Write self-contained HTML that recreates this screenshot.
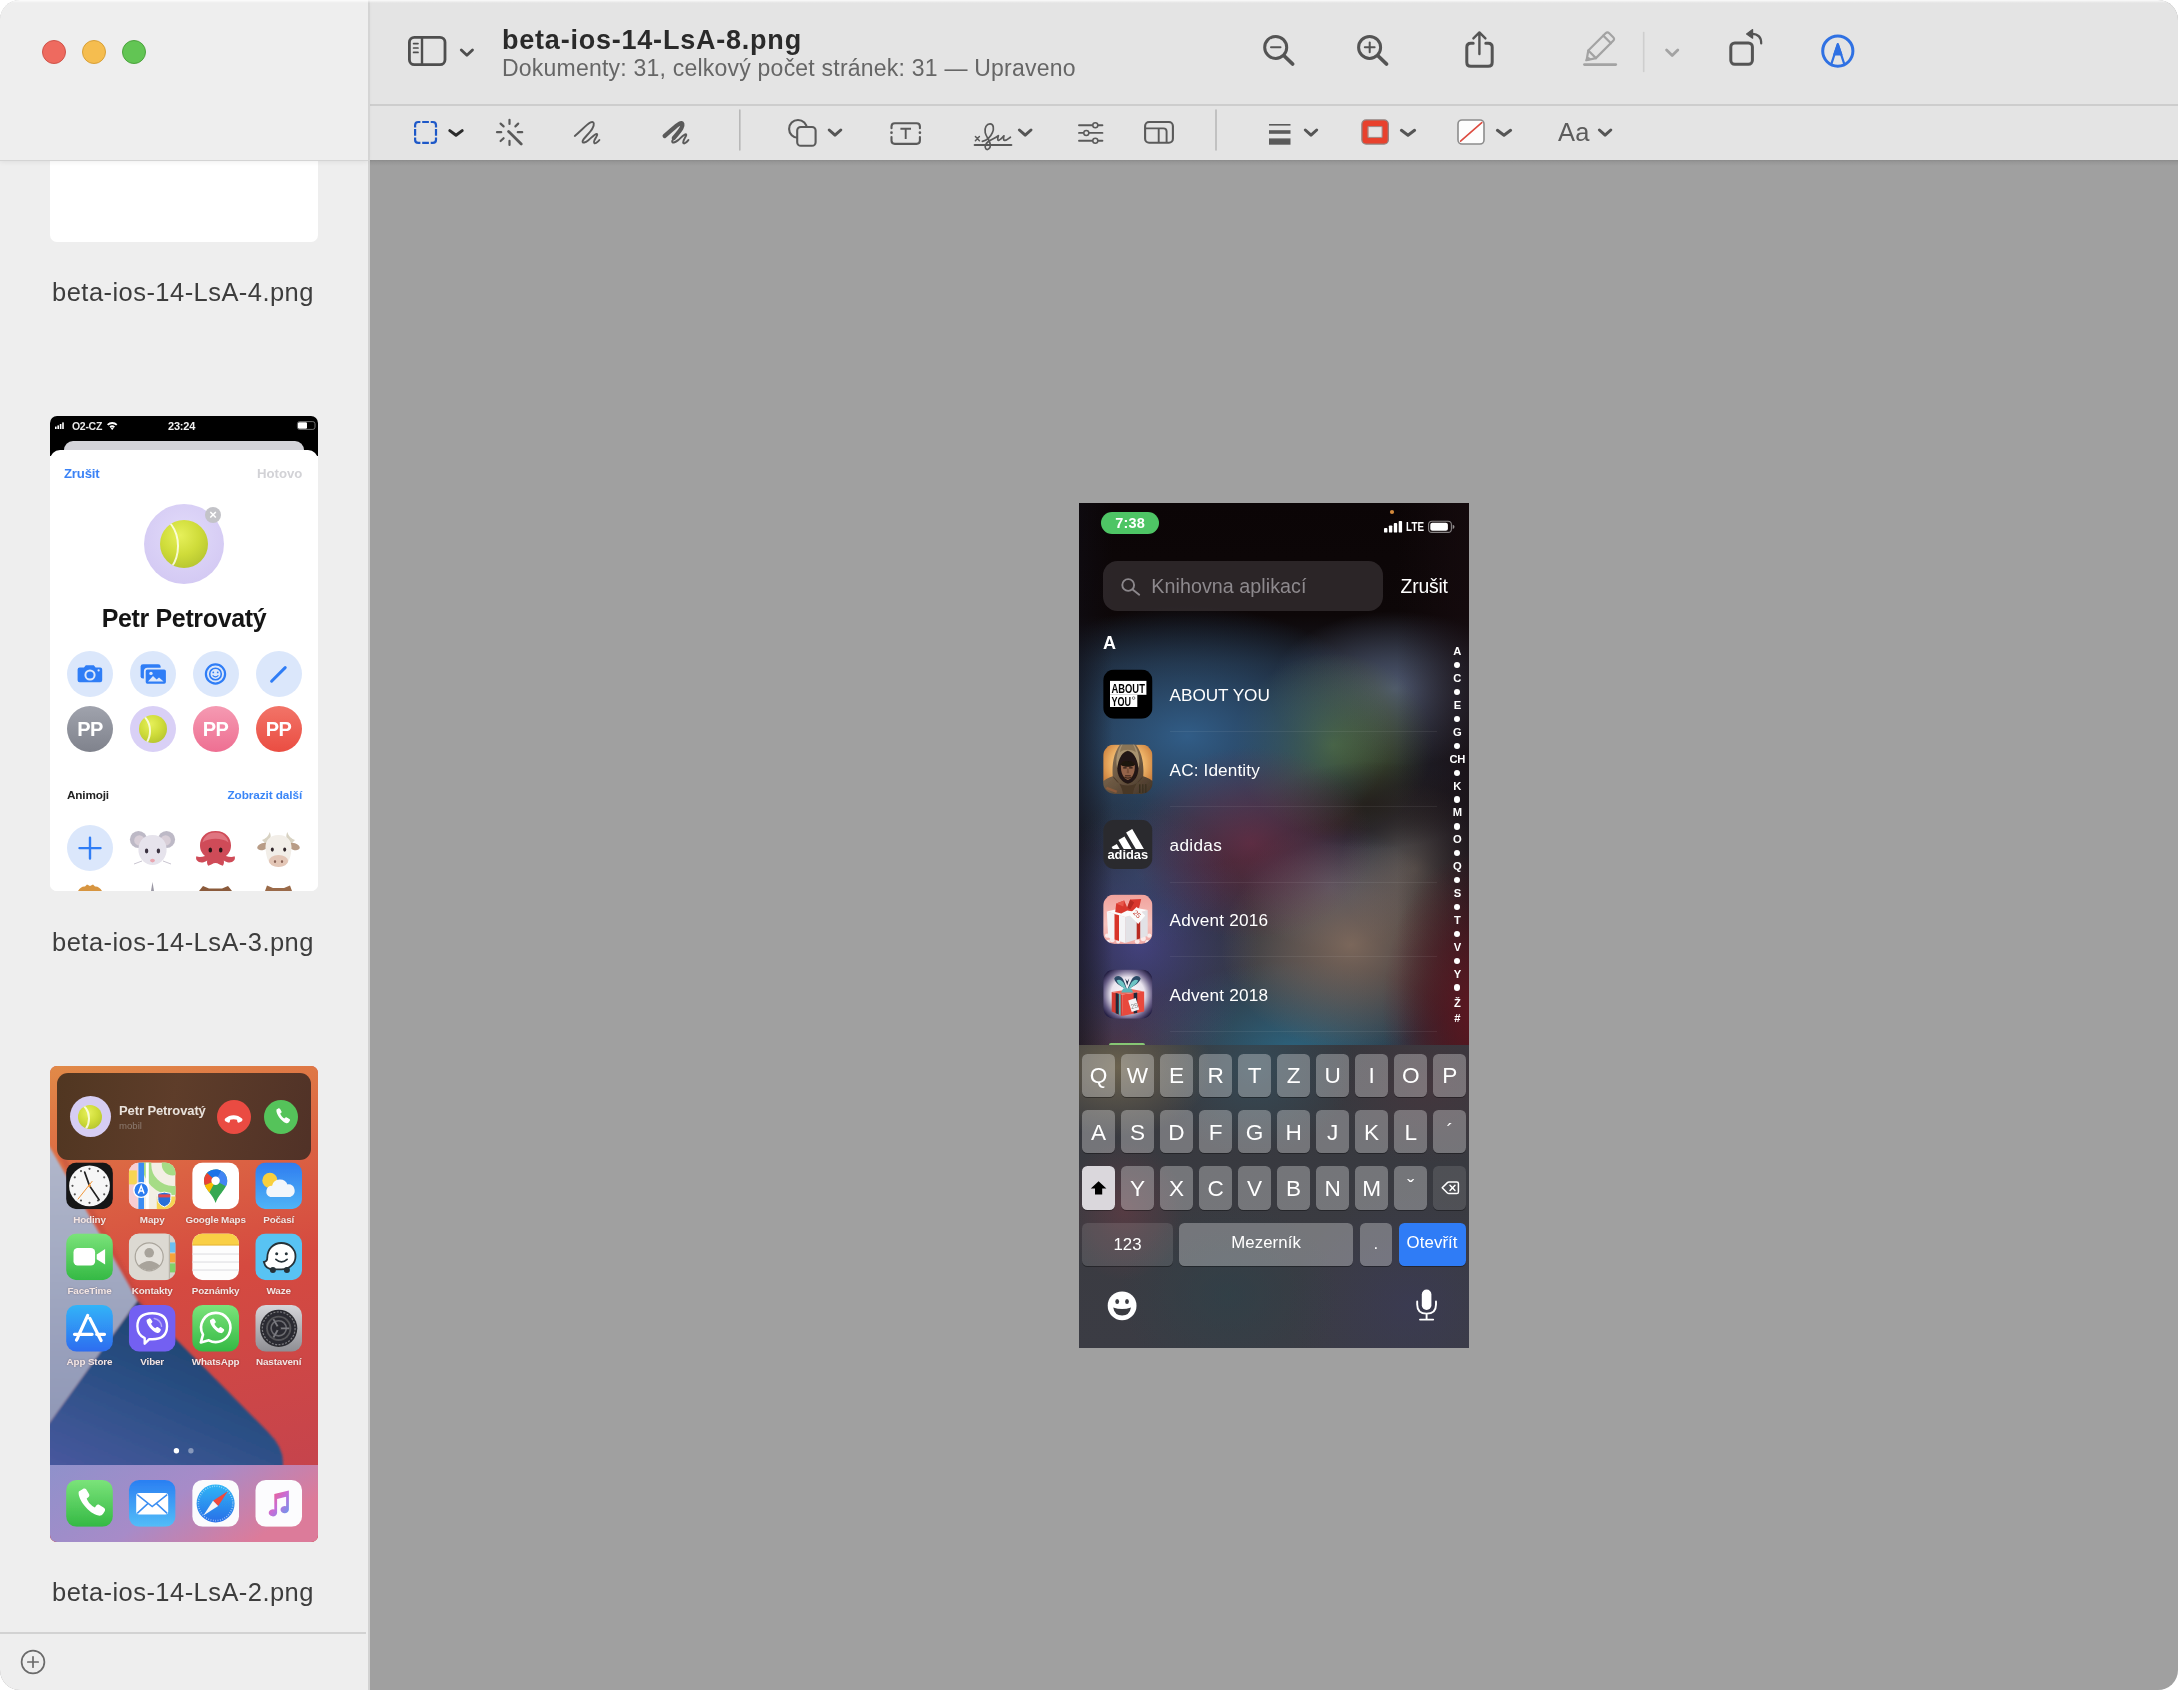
<!DOCTYPE html>
<html lang="cs">
<head>
<meta charset="utf-8">
<title>beta-ios-14-LsA-8.png</title>
<style>
*{box-sizing:border-box;margin:0;padding:0}
html,body{width:2178px;height:1690px;overflow:hidden;background:#fff;font-family:"Liberation Sans",sans-serif;}
.abs{position:absolute}
#win{position:absolute;left:0;top:0;width:2178px;height:1690px;border-radius:20px;overflow:hidden;background:#a0a0a0;will-change:transform;}
#sidebar{position:absolute;left:0;top:0;width:368px;height:1690px;background:#eeeeee;}
#sideline{position:absolute;left:368px;top:0;width:2px;height:1690px;background:linear-gradient(#dadada 0,#dadada 160px,#d2d2d2 161px);}
#titlebar{position:absolute;left:370px;top:0;width:1808px;height:106px;background:#e4e4e4;border-bottom:2px solid #cdcdcd;}
#markup{position:absolute;left:370px;top:106px;width:1808px;height:54px;background:#e4e4e4;box-shadow:0 0 0 0 #000;}
#tbshadow{position:absolute;left:370px;top:160px;width:1808px;height:6px;background:linear-gradient(#8b8b8b,#979797 35%,#a0a0a0);}
#sidetop{position:absolute;left:0;top:0;width:368px;height:161px;background:#eeeeee;border-bottom:1px solid #d4d4d4;z-index:3;box-shadow:0 1px 5px rgba(0,0,0,.07)}
.light{position:absolute;top:40px;width:24px;height:24px;border-radius:50%;}
.thumb{position:absolute;left:50px;width:268px;border-radius:7px;overflow:hidden;}
.tlabel{position:absolute;left:0;width:366px;text-align:center;font-size:25.500px;color:#3d3d3d;letter-spacing:.45px;margin-top:2px}
#title{position:absolute;left:502px;top:25px;font-size:27px;font-weight:bold;color:#2a2a2a;letter-spacing:.78px}
#subtitle{position:absolute;left:502px;top:55px;font-size:23px;color:#666;letter-spacing:.22px}
#phone{position:absolute;left:1079px;top:503px;width:390px;height:845px;overflow:hidden;background:#0c0607;}
.tb{filter:blur(.35px);white-space:nowrap}
.c46{width:46px;height:46px;border-radius:50%}
.pp{color:#fff;font-size:20px;font-weight:bold;text-align:center;line-height:46px;letter-spacing:-.5px;filter:blur(.3px)}
.ball{border-radius:50%;background:radial-gradient(circle at 42% 32%,#e6f05a 0%,#cfdc3a 45%,#a9b92a 100%);overflow:hidden}
.ball:before{content:"";position:absolute;left:-52%;top:-8%;width:84%;height:116%;border-radius:50%;border:2px solid rgba(255,255,240,.85)}
.al{width:80px;text-align:center;font-size:9.900px;font-weight:bold;color:#f3e6e4;letter-spacing:-.15px;margin-top:-.5px;filter:blur(.4px);white-space:nowrap;text-shadow:0 0 2px rgba(60,20,20,.35)}
.ix{left:358.300px;width:40px;text-align:center;font-size:11.200px;font-weight:bold;color:#fff;line-height:13px;letter-spacing:-.2px}
.k{border-radius:5.500px;background:rgba(255,255,255,.30);color:#fff;font-size:22.600px;text-align:center;box-shadow:0 1px 0 rgba(0,0,0,.35);white-space:nowrap;overflow:hidden}
.kd{background:rgba(255,255,255,.115)}
.k:not(.ks){padding-top:.8px}
.ks{font-size:16.800px;letter-spacing:.1px}
svg{position:absolute;overflow:visible}
</style>
</head>
<body>
<div id="win">
  <div id="sidebar"></div>
  <div id="sideline"></div>
  <div id="titlebar"></div>
  <div id="markup"></div>
  <div id="tbshadow"></div>

  <!-- thumb 1 (partially scrolled) -->
  <div class="thumb" style="top:120px;height:122px;background:#fff"></div>
  <div class="tlabel" style="top:276px">beta-ios-14-LsA-4.png</div>

  <!-- thumb 2 : contact photo editor -->
  <div class="thumb" id="t2" style="top:416px;height:475px;background:#fff">
    <div class="abs" style="left:0;top:0;width:268px;height:40px;background:#000"></div>
    <div class="abs" style="left:14px;top:25px;width:240px;height:20px;border-radius:9px 9px 0 0;background:#d3d3d8"></div>
    <div class="abs" style="left:0;top:34px;width:268px;height:441px;border-radius:10px 10px 0 0;background:#fff"></div>
    <!-- status bar -->
    <svg style="left:0;top:0" width="268" height="20" viewBox="0 0 268 20">
      <g fill="#fff"><rect x="5" y="10.6" width="1.6" height="2.4"/><rect x="7.4" y="9.4" width="1.6" height="3.6"/><rect x="9.8" y="8" width="1.6" height="5"/><rect x="12.2" y="6.4" width="1.6" height="6.6"/>
      <path d="M57 8.2 a7.4 7.4 0 0 1 10.4 0 l-1.3 1.4 a5.4 5.4 0 0 0 -7.8 0z M59.4 10.6 a4 4 0 0 1 5.6 0 l-1.3 1.3 a2.2 2.2 0 0 0 -3 0z M62.2 14 l-1.5 -1.6 a2.1 2.1 0 0 1 3 0z"/>
      <rect x="248" y="6.2" width="9" height="6.6" rx="1.2"/></g>
      <rect x="247.4" y="5.6" width="17.6" height="7.8" rx="2.2" fill="none" stroke="#8a8a8a" stroke-width=".8"/>
    </svg>
    <div class="abs tb" style="left:22px;top:3.5px;font-size:10.5px;font-weight:bold;color:#e8e8e8;letter-spacing:-.3px">O2-CZ</div>
    <div class="abs tb" style="left:118px;top:3.5px;font-size:11px;font-weight:bold;color:#f2f2f2;letter-spacing:-.2px">23:24</div>
    <div class="abs tb" style="left:14px;top:49.500px;font-size:13.200px;color:#3a82f6;font-weight:bold;letter-spacing:-.2px">Zrušit</div>
    <div class="abs tb" style="left:207px;top:49.500px;font-size:13.200px;color:#d2d2d6;font-weight:bold;letter-spacing:0">Hotovo</div>
    <!-- avatar -->
    <div class="abs" style="left:94px;top:88px;width:80px;height:80px;border-radius:50%;background:radial-gradient(circle at 50% 40%,#e2dbfa,#cfc4f1)"></div>
    <div class="abs ball" style="left:110px;top:104px;width:48px;height:48px"></div>
    <div class="abs" style="left:155px;top:91px;width:16px;height:16px;border-radius:50%;background:#c3c3c8;color:#fff;font-size:13px;line-height:15px;text-align:center;font-weight:bold">×</div>
    <div class="abs tb" style="left:0;top:188px;width:268px;text-align:center;font-size:25px;font-weight:bold;color:#151515;letter-spacing:-.35px">Petr Petrovatý</div>
    <!-- row 1 -->
    <div class="abs c46" style="left:17px;top:235px;background:#dbe7fb"></div>
    <div class="abs c46" style="left:79.5px;top:235px;background:#dbe7fb"></div>
    <div class="abs c46" style="left:142.5px;top:235px;background:#dbe7fb"></div>
    <div class="abs c46" style="left:205.5px;top:235px;background:#dbe7fb"></div>
    <svg style="left:0;top:235px" width="268" height="46" viewBox="0 235 268 46">
      <!-- camera -->
      <path d="M29.6 251.6 h4.4 l1.8 -2.4 h8 l1.8 2.4 h4.6 q2 0 2 2 v10.6 q0 2 -2 2 h-20.6 q-2 0 -2 -2 v-10.6 q0 -2 2 -2z" fill="#2f7df6"/>
      <circle cx="40" cy="259" r="4.6" fill="none" stroke="#dbe7fb" stroke-width="2"/><circle cx="48.6" cy="254.4" r="1.1" fill="#dbe7fb"/>
      <!-- photos -->
      <rect x="90.6" y="248.2" width="20" height="14.4" rx="2.4" fill="#2f7df6"/>
      <rect x="94.8" y="252.6" width="22" height="16" rx="2.6" fill="#2f7df6" stroke="#dbe7fb" stroke-width="1.8"/>
      <path d="M98 265.6 l5 -5.6 l3.6 3.6 l2.4 -2 l4.6 4z" fill="#dbe7fb"/><circle cx="101" cy="257.4" r="1.7" fill="#dbe7fb"/>
      <!-- emoji -->
      <circle cx="165.5" cy="258" r="9.6" fill="none" stroke="#2f7df6" stroke-width="2.2"/><circle cx="165.5" cy="258" r="5.8" fill="none" stroke="#2f7df6" stroke-width="1.6"/>
      <circle cx="163.3" cy="256.4" r=".9" fill="#2f7df6"/><circle cx="167.7" cy="256.4" r=".9" fill="#2f7df6"/><path d="M162.6 259.4 q2.9 2.8 5.8 0" stroke="#2f7df6" stroke-width="1.2" fill="none"/>
      <!-- pencil -->
      <path d="M221.6 265.2 l13.6 -13.6" stroke="#2f7df6" stroke-width="3" stroke-linecap="round"/>
    </svg>
    <!-- row 2 -->
    <div class="abs c46 pp" style="left:17px;top:290px;background:linear-gradient(#a0a3ad,#7f828c)">PP</div>
    <div class="abs c46" style="left:79.5px;top:290px;background:#d9d0f6"></div>
    <div class="abs ball" style="left:88.5px;top:299px;width:28px;height:28px"></div>
    <div class="abs c46 pp" style="left:142.5px;top:290px;background:linear-gradient(#f59ab2,#ee6f92)">PP</div>
    <div class="abs c46 pp" style="left:205.5px;top:290px;background:linear-gradient(#f27468,#ea4d42)">PP</div>
    <div class="abs tb" style="left:17px;top:372px;font-size:11.800px;font-weight:bold;color:#222;letter-spacing:-.2px">Animoji</div>
    <div class="abs tb" style="left:177.500px;top:372px;font-size:11.800px;font-weight:bold;color:#3a86f7;letter-spacing:-.1px">Zobrazit další</div>
    <!-- row 3 -->
    <div class="abs c46" style="left:17px;top:409px;background:#dbe7fb"></div>
    <svg style="left:0;top:405px" width="268" height="70" viewBox="0 405 268 70">
      <path d="M40 421.6 v21 M29.5 432.1 h21" stroke="#2f7df6" stroke-width="2.4" stroke-linecap="round"/>
      <!-- mouse -->
      <g filter="url(#soft)">
      <circle cx="88.5" cy="423.5" r="8.6" fill="#bdb9c6"/><circle cx="116.5" cy="423.5" r="8.6" fill="#bdb9c6"/>
      <circle cx="89.4" cy="424.4" r="5.2" fill="#d9cfd8"/><circle cx="115.6" cy="424.4" r="5.2" fill="#d9cfd8"/>
      <path d="M102.5 419 c10 0 15 8 14 17 c-1 7 -7 13 -14 13 c-7 0 -13 -6 -14 -13 c-1 -9 4 -17 14 -17z" fill="#e6e3ec"/>
      <ellipse cx="96.6" cy="435" rx="1.7" ry="2.4" fill="#3a3340"/><ellipse cx="108.4" cy="435" rx="1.7" ry="2.4" fill="#3a3340"/>
      <ellipse cx="102.5" cy="444.6" rx="2.4" ry="1.8" fill="#e9a6b0"/>
      <path d="M92 445 l-8 3 M113 445 l8 3" stroke="#c9c5d0" stroke-width="1"/>
      <!-- octopus -->
      <path d="M165.5 415 c11 0 15.5 7.5 15.5 14.5 c0 5 -2.4 8.4 -5 10.4 c3 1.2 6.2 1.6 8.6 .4 c1.4 3.4 -1.6 6.6 -6 6.2 c-1.6 -.2 -3.4 -1 -4.8 -2 c.4 2 .2 3.8 -1 5.2 c-2.8 -.4 -4.6 -2.6 -7.3 -2.6 c-2.7 0 -4.5 2.2 -7.3 2.6 c-1.2 -1.4 -1.4 -3.2 -1 -5.2 c-1.4 1 -3.2 1.8 -4.8 2 c-4.4 .4 -7.4 -2.8 -6 -6.200000000000001 c2.4 1.2 5.6 .8 8.6 -.4 c-2.600000000000001 -2 -5 -5.4 -5 -10.4 c0 -7 4.5 -14.5 15.5 -14.5z" fill="#cf4c58"/>
      <path d="M165.5 416.400 c8 0 12 5 13 10 c-6 -5 -20 -5 -26 0 c1 -5 5 -10 13 -10z" fill="#e07480"/>
      <ellipse cx="160.3" cy="434" rx="1.8" ry="2.5" fill="#2a1518"/><ellipse cx="170.7" cy="434" rx="1.8" ry="2.5" fill="#2a1518"/>
      <g transform="translate(-50 0)"><!-- cow -->
      <path d="M262 424 c3 -1 7 -4 7.5 -8 c2.500 4 1 9 -3.500 12z M295 424 c-3 -1 -7 -4 -7.5 -8 c-2.500 4 -1 9 3.500 12z" fill="#d8d2c2"/>
      <ellipse cx="263" cy="430.5" rx="6" ry="3.400" fill="#b89c86" transform="rotate(-18 263 430.5)"/><ellipse cx="294" cy="430.5" rx="6" ry="3.400" fill="#b89c86" transform="rotate(18 294 430.5)"/>
      <path d="M278.500 419 c9 0 13 6 13 12 c0 5 -1 9 -2 12 c-1.600 5 -6 7.500 -11 7.500 c-5 0 -9.400 -2.500 -11 -7.500 c-1 -3 -2 -7 -2 -12 c0 -6 4 -12 13 -12z" fill="#f2eee8"/>
      <ellipse cx="278.500" cy="445" rx="9.600" ry="6" fill="#e3c6b6"/>
      <ellipse cx="272.300" cy="433.600" rx="1.500" ry="2.100" fill="#30262a"/><ellipse cx="284.700" cy="433.600" rx="1.500" ry="2.100" fill="#30262a"/>
      <ellipse cx="275" cy="445.400" rx="1.100" ry="1.500" fill="#8a6458"/><ellipse cx="282" cy="445.400" rx="1.100" ry="1.500" fill="#8a6458"/></g>
      <!-- row 4 partial -->
      <path d="M28 475 q3 -5 7 -4.500 l2 -2 l3 1.500 l3 -1.500 l2 2 q4 -.5 7 4.500z" fill="#d7953f"/>
      <path d="M101 475 l1.500 -9 l1.500 9z" fill="#9a98a4"/>
      <path d="M149 475 l4 -5 l6 2.400 h13 l6 -2.400 l4 5z" fill="#8a5a3a"/>
      <path d="M215 475 l2 -5.500 l6 2.500 h11 l6 -2.500 l2 5.500z" fill="#9a6a48"/>
      </g>
      <defs><filter id="soft" x="-5%" y="-5%" width="110%" height="110%"><feGaussianBlur stdDeviation=".45"/></filter></defs>
    </svg>
  </div>
  <div class="tlabel" style="top:926px">beta-ios-14-LsA-3.png</div>

  <!-- thumb 3 : home screen with call banner -->
  <div class="thumb" id="t3" style="top:1066px;height:476px;background:#d2493f">
    <svg style="left:0;top:0" width="268" height="476" viewBox="50 1066 268 476">
      <defs>
        <linearGradient id="wred" x1="0" y1="0" x2="0.12" y2="1"><stop offset="0" stop-color="#e18a48"/><stop offset=".1" stop-color="#df7a45"/><stop offset=".28" stop-color="#db6243"/><stop offset=".5" stop-color="#d54a40"/><stop offset="1" stop-color="#c4434e"/></linearGradient>
        <linearGradient id="wgray" x1="0" y1="0" x2="0" y2="1"><stop offset="0" stop-color="#b3b9cc"/><stop offset="1" stop-color="#8f97b6"/></linearGradient>
        <linearGradient id="wnavy" x1=".7" y1="0" x2=".1" y2="1"><stop offset="0" stop-color="#1c3f68"/><stop offset=".5" stop-color="#2a4f84"/><stop offset="1" stop-color="#47589d"/></linearGradient>
        <linearGradient id="wdock" x1="0" y1="0" x2="1" y2=".4"><stop offset="0" stop-color="#8f91cb"/><stop offset=".55" stop-color="#a78bc8"/><stop offset="1" stop-color="#dc7b9a"/></linearGradient>
        <filter id="b1" x="-10%" y="-10%" width="120%" height="120%"><feGaussianBlur stdDeviation="1.2"/></filter>
        <filter id="b0" x="-10%" y="-10%" width="120%" height="120%"><feGaussianBlur stdDeviation=".5"/></filter>
      </defs>
      <rect x="50" y="1066" width="268" height="476" fill="url(#wred)"/>
      <g filter="url(#b1)">
        <path d="M40 1130 L137.700 1300.400 L46 1428z" fill="url(#wgray)"/>
        <path d="M137.700 1300.400 L268 1432 Q283 1447 283 1462 V1470 H46 V1428z" fill="url(#wnavy)"/>
        <path d="M60 1152 L150 1320" stroke="#b8433a" stroke-width="5" opacity=".35"/>
      </g>
      <rect x="50" y="1465" width="268" height="77" fill="url(#wdock)"/>
    </svg>
    <!-- banner -->
    <div class="abs" style="left:7px;top:6.500px;width:254px;height:87px;border-radius:11px;background:linear-gradient(100deg,#4c3420,#5a3b29 45%,#4c3026);opacity:.97"></div>
    <div class="abs" style="left:19.500px;top:30px;width:41px;height:41px;border-radius:50%;background:#d6cdf3"></div>
    <div class="abs ball" style="left:28px;top:38.500px;width:24px;height:24px"></div>
    <div class="abs tb" style="left:69px;top:37px;font-size:13px;font-weight:bold;color:#e9e2dc;letter-spacing:-.1px">Petr Petrovatý</div>
    <div class="abs tb" style="left:69px;top:53.500px;font-size:9.600px;color:#8c7b70">mobil</div>
    <div class="abs" style="left:166.500px;top:33.500px;width:34px;height:34px;border-radius:50%;background:#ea4b42"></div>
    <div class="abs" style="left:214px;top:33.500px;width:34px;height:34px;border-radius:50%;background:#55c35a"></div>
    <svg style="left:0;top:0" width="268" height="100" viewBox="0 0 268 100">
      <path d="M175.200 52.600 c4.600 -4.600 12.200 -4.600 16.800 0 c.8 .8 .600 2 -.2 2.600 l-2.600 1.400 c-.8 .4 -1.600 0 -1.800 -.8 l-.4 -2 c-2 -.8 -4.800 -.8 -6.800 0 l-.4 2 c-.2 .8 -1 1.200 -1.800 .8 l-2.600 -1.400 c-.8 -.600 -1 -1.800 -.2 -2.600z" fill="#fff"/>
      <path d="M226.400 44 c-.4 4 5 11.400 9.400 13 c1 .4 2.200 .2 2.800 -.6 l1.200 -1.600 c.4 -.6 .2 -1.400 -.4 -1.800 l-2.600 -1.600 c-.6 -.4 -1.400 -.2 -1.800 .4 l-.6 .8 c-1.600 -.8 -3.600 -3.200 -4.200 -5 l.8 -.6 c.6 -.4 .8 -1.200 .4 -1.800 l-1.400 -2.400 c-.4 -.6 -1.200 -.8 -1.800 -.4 l-1.200 .8 c-.4 .2 -.6 .4 -.6 .8z" fill="#fff"/>
    </svg>
<svg style="left:0;top:0" width="268" height="476" viewBox="0 0 268 476" filter="url(#b0)">
<defs>
<linearGradient id="gGreen" x1="0" y1="0" x2="0" y2="1"><stop offset="0" stop-color="#7be37a"/><stop offset="1" stop-color="#34b944"/></linearGradient>
<linearGradient id="gBlue" x1="0" y1="0" x2="0" y2="1"><stop offset="0" stop-color="#2f7cf0"/><stop offset="1" stop-color="#4fb4f6"/></linearGradient>
<linearGradient id="gAS" x1="0" y1="0" x2="0" y2="1"><stop offset="0" stop-color="#32b4f8"/><stop offset="1" stop-color="#2d6cf0"/></linearGradient>
<linearGradient id="gMail" x1="0" y1="0" x2="0" y2="1"><stop offset="0" stop-color="#2a7ff2"/><stop offset="1" stop-color="#53bdf8"/></linearGradient>
<linearGradient id="gSet" x1="0" y1="0" x2="0" y2="1"><stop offset="0" stop-color="#d6d6da"/><stop offset="1" stop-color="#8e8e93"/></linearGradient>
<linearGradient id="gSaf" x1="0" y1="0" x2="0" y2="1"><stop offset="0" stop-color="#2fb6f6"/><stop offset="1" stop-color="#2a6fe8"/></linearGradient>
<linearGradient id="gMus" x1="0" y1="0" x2="1" y2="1"><stop offset="0" stop-color="#fb5c74"/><stop offset=".5" stop-color="#c86dd7"/><stop offset="1" stop-color="#5e9cf0"/></linearGradient>
</defs>
<clipPath id="cl00"><rect x="0" y="0" width="46.8" height="46.8" rx="10.5"/></clipPath><g transform="translate(16.1 96.4)" clip-path="url(#cl00)"><rect width="46.8" height="46.8" fill="#141416"/><circle cx="23.4" cy="23.4" r="20.4" fill="#f6f6f6"/><circle cx="23.4" cy="6.4" r="1.1" fill="#555"/><circle cx="31.9" cy="8.7" r="1.1" fill="#555"/><circle cx="38.1" cy="14.9" r="1.1" fill="#555"/><circle cx="40.4" cy="23.4" r="1.1" fill="#555"/><circle cx="38.1" cy="31.9" r="1.1" fill="#555"/><circle cx="31.9" cy="38.1" r="1.1" fill="#555"/><circle cx="23.4" cy="40.4" r="1.1" fill="#555"/><circle cx="14.9" cy="38.1" r="1.1" fill="#555"/><circle cx="8.7" cy="31.9" r="1.1" fill="#555"/><circle cx="6.4" cy="23.4" r="1.1" fill="#555"/><circle cx="8.7" cy="14.9" r="1.1" fill="#555"/><circle cx="14.9" cy="8.7" r="1.1" fill="#555"/><path d="M23.4 23.4 L18.6 9.8" stroke="#222" stroke-width="1.8" stroke-linecap="round"/><path d="M23.4 23.4 L33 37.4" stroke="#222" stroke-width="1.6" stroke-linecap="round"/><path d="M26 19 L12 36.600" stroke="#f0963a" stroke-width="1" stroke-linecap="round"/><circle cx="23.4" cy="23.4" r="1.4" fill="#f0963a"/></g>
<clipPath id="cl10"><rect x="0" y="0" width="46.8" height="46.8" rx="10.5"/></clipPath><g transform="translate(78.8 96.4)" clip-path="url(#cl10)"><rect width="46.8" height="46.8" fill="#f3efe4"/><rect x="0" y="0" width="9" height="46.8" fill="#f7cdd2"/><rect x="0" y="8" width="8" height="14" fill="#f6d552"/><circle cx="44" cy="2" r="26" fill="none" stroke="#a6dc86" stroke-width="9"/><circle cx="44" cy="2" r="11" fill="#a6dc86"/><path d="M28 46.8 V34 H46.8 V46.8z" fill="#f6d552"/><rect x="9.600" y="0" width="5.600" height="46.800" fill="#3b8cf2"/><rect x="17" y="0" width="3" height="46.800" fill="#fff"/><circle cx="12.400" cy="27.600" r="7.400" fill="#2c7bf0" stroke="#fff" stroke-width="1.4"/><path d="M9.600 31 L12.400 23.400 L15.200 31 M10.600 28.600 H14.200" stroke="#fff" stroke-width="1.500" fill="none"/><path d="M29 31 q6.500 -2.500 13 0 v6 q0 5 -6.500 7.500 q-6.500 -2.500 -6.500 -7.500z" fill="#2c6fd8" stroke="#fff" stroke-width="1"/><rect x="29.600" y="32" width="11.800" height="3" fill="#e24b4b"/></g>
<clipPath id="cl20"><rect x="0" y="0" width="46.8" height="46.8" rx="10.5"/></clipPath><g transform="translate(142.2 96.4)" clip-path="url(#cl20)"><rect width="46.8" height="46.8" fill="#fff"/><path d="M23.400 7 c7 0 11.600 5 11.600 11.400 c0 4.600 -2.600 8 -5.400 11.600 c-2.600 3.400 -5 6.400 -6.200 10.600 c-1.200 -4.200 -3.600 -7.200 -6.200 -10.600 c-2.800 -3.600 -5.400 -7 -5.400 -11.600 c0 -6.400 4.600 -11.400 11.600 -11.400z" fill="#34a853"/><path d="M23.400 7 c7 0 11.600 5 11.600 11.400 c0 2 -.5 3.800 -1.300 5.400 L23.400 18.400z" fill="#4285f4"/><path d="M23.400 7 c-3.600 0 -6.600 1.400 -8.600 3.600 l8.600 7.800 l5.600 -10 c-1.600 -.9 -3.500 -1.400 -5.600 -1.400z" fill="#1a73e8"/><path d="M14.800 10.600 c-1.900 2 -3 4.800 -3 7.800 c0 1.600 .3 3 .8 4.400 l10.800 -4.400z" fill="#ea4335"/><path d="M12.600 22.800 c1 2.600 2.800 4.900 4.600 7.200 l6.200 -11.600z" fill="#fbbc04"/><circle cx="23.400" cy="18.400" r="4.200" fill="#fff"/></g>
<clipPath id="cl30"><rect x="0" y="0" width="46.8" height="46.8" rx="10.5"/></clipPath><g transform="translate(205.3 96.4)" clip-path="url(#cl30)"><rect width="46.8" height="46.8" fill="url(#gBlue)"/><circle cx="14.600" cy="18" r="7.600" fill="#f8cf3e"/><path d="M15 34.600 a5.800 5.800 0 0 1 1.800 -11.300 a8.200 8.200 0 0 1 15.400 -1.300 a6.400 6.400 0 0 1 3.600 12.100 q-.8 .5 -2 .5z" fill="#f2f6fb"/></g>
<clipPath id="cl01"><rect x="0" y="0" width="46.8" height="46.8" rx="10.5"/></clipPath><g transform="translate(16.1 167.4)" clip-path="url(#cl01)"><rect width="46.8" height="46.8" fill="url(#gGreen)"/><rect x="7.400" y="14.600" width="21.600" height="17.600" rx="4.200" fill="#fff"/><path d="M30.600 21 l8.400 -5.400 v15.600 l-8.400 -5.400z" fill="#fff"/></g>
<clipPath id="cl11"><rect x="0" y="0" width="46.8" height="46.8" rx="10.5"/></clipPath><g transform="translate(78.8 167.4)" clip-path="url(#cl11)"><rect width="46.8" height="46.8" fill="#d6d2ca"/><rect x="0" y="0" width="40" height="46.800" fill="#dcd9d2"/><rect x="40" y="0" width="1.200" height="46.800" fill="#b9b4aa"/><rect x="41.200" y="9" width="5.600" height="10" fill="#6cc0f2"/><rect x="41.200" y="20" width="5.600" height="9" fill="#f5a33b"/><rect x="41.200" y="30" width="5.600" height="9" fill="#82cf6a"/><circle cx="20.400" cy="23.400" r="14" fill="#e4e1db" stroke="#aaa59c" stroke-width="1.200"/><circle cx="20.400" cy="19.400" r="4.800" fill="#a8a39b"/><path d="M9.800 32 q10.600 -9 21.200 0 a14 14 0 0 1 -21.200 0z" fill="#a8a39b"/></g>
<clipPath id="cl21"><rect x="0" y="0" width="46.8" height="46.8" rx="10.5"/></clipPath><g transform="translate(142.2 167.4)" clip-path="url(#cl21)"><rect width="46.8" height="46.8" fill="#fdfdfd"/><rect width="46.800" height="11.600" fill="#f9cf45"/><rect y="11" width="46.800" height="1.200" fill="#e8b93a"/><rect y="20" width="46.800" height="1.300" fill="#e3e3e6"/><rect y="28" width="46.800" height="1.300" fill="#e3e3e6"/><rect y="36" width="46.800" height="1.300" fill="#e3e3e6"/></g>
<clipPath id="cl31"><rect x="0" y="0" width="46.8" height="46.8" rx="10.5"/></clipPath><g transform="translate(205.3 167.4)" clip-path="url(#cl31)"><rect width="46.8" height="46.8" fill="#58c3f3"/><path d="M8.600 28.600 c2.400 -.2 3.400 -1.800 3.400 -4.400 c0 -8.400 6 -14.600 14 -14.600 c8 0 14.200 6 14.200 13.400 c0 7.400 -6.200 13 -14.200 13 h-8 c-4.800 0 -8.400 -3 -9.400 -7.400z" fill="#fff" stroke="#263238" stroke-width="1.800"/><circle cx="21.400" cy="20.400" r="1.500" fill="#263238"/><circle cx="31" cy="20.400" r="1.500" fill="#263238"/><path d="M20.600 26 q5.600 5 11.200 0" stroke="#263238" stroke-width="1.700" fill="none" stroke-linecap="round"/><circle cx="17.600" cy="36.600" r="3" fill="#263238"/><circle cx="31.600" cy="36.600" r="3" fill="#263238"/></g>
<clipPath id="cl02"><rect x="0" y="0" width="46.8" height="46.8" rx="10.5"/></clipPath><g transform="translate(16.1 238.9)" clip-path="url(#cl02)"><rect width="46.8" height="46.8" fill="url(#gAS)"/><g stroke="#fff" stroke-width="3.200" stroke-linecap="round" fill="none"><path d="M21.600 10.600 L12 31.600 M23.800 13.600 L35 35.600 M8.400 29.400 H26 M30.600 29.400 H38.400 M10.400 35.200 L11.600 33"/></g></g>
<clipPath id="cl12"><rect x="0" y="0" width="46.8" height="46.8" rx="10.5"/></clipPath><g transform="translate(78.8 238.9)" clip-path="url(#cl12)"><rect width="46.8" height="46.8" fill="#7360f2"/><path d="M23.400 8.400 c9.600 0 14.800 4.200 14.800 13 c0 8.800 -5.200 13 -14.800 13 c-1 0 -2 0 -2.900 -.2 l-4.600 4.600 v-5.600 c-4.800 -2 -7.300 -5.800 -7.300 -11.800 c0 -8.800 5.200 -13 14.800 -13z" fill="none" stroke="#fff" stroke-width="2.400" stroke-linejoin="round"/><path d="M17.800 15.200 c-.6 4 5.600 11.800 10.600 12.800 c1 .2 2 -.2 2.600 -1 l.8 -1.400 c.4 -.6 .2 -1.400 -.4 -1.800 l-2.400 -1.600 c-.6 -.4 -1.400 -.2 -1.800 .4 l-.6 .8 c-1.800 -.8 -3.800 -3 -4.400 -4.800 l.8 -.6 c.6 -.4 .8 -1.200 .4 -1.800 l-1.400 -2.200 c-.4 -.6 -1.200 -.8 -1.800 -.4 l-1.600 1 c-.4 .2 -.7 .4 -.8 .6z" fill="#fff"/><path d="M25.400 13.600 c4 .8 6.800 3.400 7.400 7.800" stroke="#b4a8fa" stroke-width="1.400" fill="none" stroke-linecap="round"/></g>
<clipPath id="cl22"><rect x="0" y="0" width="46.8" height="46.8" rx="10.5"/></clipPath><g transform="translate(142.2 238.9)" clip-path="url(#cl22)"><rect width="46.8" height="46.8" fill="url(#gGreen)"/><path d="M23.800 8 a14.600 14.600 0 1 1 -7.200 27.400 l-8 2.200 l2.200 -7.800 a14.600 14.600 0 0 1 13 -21.800z" fill="none" stroke="#fff" stroke-width="2.600" stroke-linejoin="round"/><path d="M17.800 15.400 c-.6 4 5.600 11.800 10.600 12.800 c1 .2 2 -.2 2.600 -1 l.8 -1.400 c.4 -.6 .2 -1.400 -.4 -1.800 l-2.400 -1.600 c-.6 -.4 -1.400 -.2 -1.800 .4 l-.6 .8 c-1.800 -.8 -3.800 -3 -4.400 -4.800 l.8 -.6 c.6 -.4 .8 -1.200 .4 -1.800 l-1.400 -2.200 c-.4 -.6 -1.200 -.8 -1.800 -.4 l-1.600 1 c-.4 .2 -.7 .4 -.8 .6z" fill="#fff"/></g>
<clipPath id="cl32"><rect x="0" y="0" width="46.8" height="46.8" rx="10.5"/></clipPath><g transform="translate(205.3 238.9)" clip-path="url(#cl32)"><rect width="46.8" height="46.8" fill="url(#gSet)"/><circle cx="23.400" cy="23.400" r="18.600" fill="#2c2c30"/><circle cx="23.400" cy="23.400" r="16.400" fill="none" stroke="#7a7a80" stroke-width="1.200" stroke-dasharray="2 1.400"/><circle cx="23.400" cy="23.400" r="12.600" fill="#55555a"/><circle cx="23.400" cy="23.400" r="10.800" fill="#2c2c30"/><circle cx="23.400" cy="23.400" r="7.600" fill="none" stroke="#6a6a70" stroke-width="1.600"/><path d="M23.400 23.400 L34 23.400 M23.400 23.400 L18.100 14.200 M23.400 23.400 L18.100 32.600" stroke="#7a7a80" stroke-width="1.800"/><circle cx="23.400" cy="23.400" r="2.200" fill="#2c2c30"/></g>
<clipPath id="cl03"><rect x="0" y="0" width="46.8" height="46.8" rx="10.5"/></clipPath><g transform="translate(16.1 414.0)" clip-path="url(#cl03)"><rect width="46.8" height="46.8" fill="url(#gGreen)"/><path d="M12.600 11.800 c-1.200 7.600 10.400 22 19.800 23.800 c1.800 .4 3.600 -.4 4.600 -1.800 l1.600 -2.600 c.8 -1.200 .4 -2.600 -.8 -3.400 l-4.400 -2.800 c-1.200 -.8 -2.600 -.4 -3.400 .8 l-1.200 1.600 c-3.400 -1.600 -7.200 -5.600 -8.200 -9 l1.600 -1.200 c1.200 -.8 1.400 -2.200 .6 -3.400 l-2.600 -4.200 c-.8 -1.200 -2.200 -1.400 -3.400 -.6 l-2.800 1.800 c-.8 .4 -1.200 .6 -1.400 1z" fill="#fff"/></g>
<clipPath id="cl13"><rect x="0" y="0" width="46.8" height="46.8" rx="10.5"/></clipPath><g transform="translate(78.8 414.0)" clip-path="url(#cl13)"><rect width="46.8" height="46.8" fill="url(#gMail)"/><rect x="7.400" y="13" width="32" height="21.600" rx="3" fill="#fff"/><path d="M8.400 14.600 L23.400 26.600 L38.400 14.600 M8.400 33.400 L19 23.600 M38.400 33.400 L27.800 23.600" stroke="#3a8ef2" stroke-width="1.500" fill="none"/></g>
<clipPath id="cl23"><rect x="0" y="0" width="46.8" height="46.8" rx="10.5"/></clipPath><g transform="translate(142.2 414.0)" clip-path="url(#cl23)"><rect width="46.8" height="46.8" fill="#fbfbfd"/><circle cx="23.400" cy="23.400" r="19" fill="url(#gSaf)"/><circle cx="23.400" cy="23.400" r="17.200" fill="none" stroke="#ffffff" stroke-opacity=".55" stroke-width="1.600" stroke-dasharray=".8 1.600"/><path d="M35.600 11.200 L26 26 L20.800 20.800z" fill="#f0483e"/><path d="M11.200 35.600 L20.800 20.800 L26 26z" fill="#f4f4f6"/></g>
<clipPath id="cl33"><rect x="0" y="0" width="46.8" height="46.8" rx="10.5"/></clipPath><g transform="translate(205.3 414.0)" clip-path="url(#cl33)"><rect width="46.8" height="46.8" fill="#fcfcfe"/><path d="M19 14 L33.600 10.600 V29.600 a4.200 3.600 0 1 1 -2.800 -3.400 V16.800 L21.800 19 V32.800 a4.200 3.600 0 1 1 -2.800 -3.400z" fill="url(#gMus)"/></g>
<circle cx="126.400" cy="384.800" r="2.700" fill="#fff"/><circle cx="140.900" cy="384.800" r="2.700" fill="#fff" opacity=".4"/>
</svg>
<div class="abs al" style="left:-0.5px;top:148.5px">Hodiny</div>
<div class="abs al" style="left:62.2px;top:148.5px">Mapy</div>
<div class="abs al" style="left:125.6px;top:148.5px">Google Maps</div>
<div class="abs al" style="left:188.7px;top:148.5px">Počasí</div>
<div class="abs al" style="left:-0.5px;top:219.4px">FaceTime</div>
<div class="abs al" style="left:62.2px;top:219.4px">Kontakty</div>
<div class="abs al" style="left:125.6px;top:219.4px">Poznámky</div>
<div class="abs al" style="left:188.7px;top:219.4px">Waze</div>
<div class="abs al" style="left:-0.5px;top:290.3px">App Store</div>
<div class="abs al" style="left:62.2px;top:290.3px">Viber</div>
<div class="abs al" style="left:125.6px;top:290.3px">WhatsApp</div>
<div class="abs al" style="left:188.7px;top:290.3px">Nastavení</div>
  </div>

  <div class="tlabel" style="top:1576px">beta-ios-14-LsA-2.png</div>
  <div class="abs" style="left:0;top:1632px;width:366px;height:1.500px;background:#d2d2d2"></div>
  <svg style="left:20px;top:1649px" width="26" height="26" viewBox="0 0 26 26" fill="none" stroke="#6a6a6a" stroke-width="1.700" stroke-linecap="round"><circle cx="13" cy="13" r="11.400"/><path d="M13 7.800v10.400M7.800 13h10.400"/></svg>

  <div id="sidetop">
    <div class="light" style="left:42px;background:#ee6a5f;border:1px solid #cf544a"></div>
    <div class="light" style="left:82px;background:#f5bd4f;border:1px solid #d8a038"></div>
    <div class="light" style="left:122px;background:#62c554;border:1px solid #4ca33e"></div>
  </div>

  <div class="abs" style="left:0;top:0;width:2178px;height:2.500px;background:linear-gradient(rgba(255,255,255,.85),rgba(255,255,255,0));z-index:9"></div>
  <div id="title">beta-ios-14-LsA-8.png</div>
  <div id="subtitle">Dokumenty: 31, celkový počet stránek: 31 — Upraveno</div>

  <svg id="tbicons" style="left:0;top:0;z-index:5" width="2178" height="162" viewBox="0 0 2178 162" fill="none" stroke-linecap="round" stroke-linejoin="round">
    <!-- sidebar toggle -->
    <g stroke="#4e4e4e">
      <rect x="409.4" y="37.3" width="35.6" height="27.4" rx="5" stroke-width="2.8"/>
      <line x1="422" y1="37.5" x2="422" y2="64.5" stroke-width="2.4" stroke-linecap="butt"/>
      <g stroke-width="1.7"><line x1="413.6" y1="43.6" x2="418" y2="43.6"/><line x1="413.6" y1="48" x2="418" y2="48"/><line x1="413.6" y1="52.4" x2="418" y2="52.4"/></g>
      <path d="M461.3 49.9 L466.9 55.3 L472.5 49.9" stroke-width="2.8"/>
    </g>
    <!-- zoom out / in / share -->
    <g stroke="#545454">
      <circle cx="1275.7" cy="47.4" r="11" stroke-width="3"/>
      <line x1="1284.3" y1="56" x2="1292.6" y2="64" stroke-width="3.8"/>
      <line x1="1271" y1="47.2" x2="1280.5" y2="47.2" stroke-width="2"/>
      <circle cx="1369.6" cy="47.4" r="11" stroke-width="3"/>
      <line x1="1378.2" y1="56" x2="1386.5" y2="64" stroke-width="3.8"/>
      <line x1="1364.8" y1="47.3" x2="1374.6" y2="47.3" stroke-width="2"/>
      <line x1="1369.7" y1="42.4" x2="1369.7" y2="52.2" stroke-width="2"/>
      <path d="M1473.2 43.3 H1470.8 Q1466.8 43.3 1466.8 47.3 V62.2 Q1466.8 66.2 1470.8 66.2 H1488.2 Q1492.2 66.2 1492.2 62.2 V47.3 Q1492.2 43.3 1488.2 43.3 H1485.8" stroke-width="3"/>
      <path d="M1479.4 54 V32.8 M1473.4 38.4 L1479.4 32.4 L1485.4 38.4" stroke-width="2.4"/>
    </g>
    <!-- highlighter (disabled) -->
    <g stroke="#a3a3a3" stroke-width="2.2">
      <line x1="1584.4" y1="64.6" x2="1615.8" y2="64.6" stroke-width="2.6"/>
      <path d="M1588.3 50.5 L1605.6 33.2 Q1607.4 31.4 1609.2 33.2 L1613.2 37.2 Q1615 39 1613.2 40.8 L1595.9 58.1 L1586.6 60.2 Z"/>
      <path d="M1603.3 35.6 L1610.9 43.2"/>
      <path d="M1588.3 50.5 L1595.9 58.1"/>
      <path d="M1586 60.4 L1588.6 57.8 L1590.4 59.2 Z" fill="#a3a3a3" stroke-width="1.5"/>
    </g>
    <line x1="1643.7" y1="32.5" x2="1643.7" y2="71.5" stroke="#cecece" stroke-width="1.6"/>
    <path d="M1666.6 50 L1672.2 55.4 L1677.8 50" stroke="#a3a3a3" stroke-width="2.8"/>
    <!-- rotate -->
    <g stroke="#545454">
      <rect x="1730.8" y="42.9" width="21.6" height="21.4" rx="4" stroke-width="3"/>
      <path d="M1761.2 43.4 Q1761.4 34.2 1751.8 33.9" stroke-width="2.2"/>
      <path d="M1746.6 33.9 L1752.6 29.6 L1752.6 38.2 Z" fill="#545454" stroke-width="1.2"/>
    </g>
    <!-- markup (active) -->
    <g stroke="#2f71e3">
      <circle cx="1837.8" cy="51.1" r="15.1" stroke-width="3"/>
      <path d="M1831.4 63.8 L1837.8 44.2 L1844.2 63.8" stroke-width="2.2" stroke-linejoin="round"/>
      <path d="M1837.8 44 L1841.5 54.6 H1834.1 Z" fill="#2f71e3" stroke-width="1.8" stroke-linejoin="round"/>
    </g>

    <!-- ===== markup row ===== -->
    <!-- selection -->
    <path d="M415.1 127.4 V125.2 Q415.1 122 418.3 122 H420.4 M422.2 122 H428.9 M430.7 122 H432.8 Q436 122 436 125.2 V127.4 M436 129.1 V135.8 M436 137.500 V139.700 Q436 142.900 432.800 142.900 H430.700 M428.900 142.900 H422.200 M420.400 142.900 H418.300 Q415.100 142.900 415.100 139.700 V137.500 M415.100 135.800 V129.100" stroke="#1d58c8" stroke-width="2.200" stroke-linecap="butt"/>
    <path d="M449.8 130.6 L456 135.2 L462.2 130.6" stroke="#2b2b2b" stroke-width="3"/>
    <!-- magic wand -->
    <g stroke="#5a5a5a" stroke-width="2.2">
      <line x1="509.5" y1="119.8" x2="509.5" y2="124"/><line x1="509.5" y1="140.8" x2="509.5" y2="145"/>
      <line x1="497" y1="132.2" x2="501.2" y2="132.2"/><line x1="517.8" y1="132.2" x2="522.2" y2="132.2"/>
      <line x1="500.6" y1="123.6" x2="503.6" y2="126.4"/><line x1="518.2" y1="123.6" x2="515.4" y2="126.4"/>
      <line x1="500.6" y1="141" x2="503.6" y2="138.2"/>
      <line x1="508.6" y1="131.4" x2="521.2" y2="144" stroke-width="2.8"/>
    </g>
    <!-- sketch -->
    <path d="M574.8 136 C581 131 587 124 590.6 122.4 C594.4 120.8 594.6 124.6 592.4 128.4 C589.6 133.4 583 138.6 582.6 141.2 C582.2 143.6 585.4 142.6 588.4 140.2 C591.6 137.6 595 133.8 596.6 134 C598.4 134.2 595.6 137.6 594.4 140.4 C593.2 143.2 594.6 144 596.4 142.8 C597.8 141.9 598.8 140.9 599.4 140" stroke="#5a5a5a" stroke-width="1.9"/>
    <!-- draw (thick) -->
    <path d="M665.2 135.6 C671 131 676 125.6 679.8 123.6 C683 122 683.4 124.8 681.6 128.2 C679 133.2 672.4 138.6 672.2 141.2 C672 143.4 675 142.6 677.8 140.4 C681 137.8 684.4 133.8 685.8 134.2 C687.2 134.6 684.6 137.8 683.6 140.6 C682.6 143.4 684 144 685.6 142.8 C686.9 141.9 687.8 140.9 688.4 140" stroke="#5a5a5a" stroke-width="2"/>
    <path d="M664.6 136 C670.6 131.2 676 125.4 679.6 123.6 C682.8 122 683.2 124.8 681.4 128.2 C679.6 131.6 676 135 673.8 138" stroke="#5a5a5a" stroke-width="4.2"/>
    <line x1="739.8" y1="110" x2="739.8" y2="150" stroke="#b8b8b8" stroke-width="1.6"/>
    <!-- shapes -->
    <g stroke="#5a5a5a" stroke-width="2.1">
      <circle cx="798" cy="128.9" r="8.9"/>
      <rect x="797.2" y="127" width="18.4" height="18.8" rx="3.6" fill="#e4e4e4"/>
    </g>
    <path d="M829.2 130 L835 135.2 L840.8 130" stroke="#555" stroke-width="3"/>
    <!-- text box -->
    <g stroke="#5a5a5a" stroke-width="2.1">
      <path d="M891.5 128.3 V126.6 Q891.5 123.3 894.8 123.3 H916.6 Q919.9 123.3 919.9 126.6 V128.3"/>
      <path d="M891.5 137 V140.6 Q891.5 143.9 894.8 143.9 H916.6 Q919.9 143.9 919.9 140.6 V137"/>
      <line x1="891.5" y1="132.6" x2="891.5" y2="132.7" stroke-width="2.6"/><line x1="919.9" y1="132.6" x2="919.9" y2="132.7" stroke-width="2.6"/>
      <path d="M900.4 128.8 H911 M905.7 128.8 V139" stroke-width="1.9" stroke-linecap="butt"/>
    </g>
    <!-- signature -->
    <g stroke="#5a5a5a">
      <line x1="974.6" y1="145" x2="1011.4" y2="145" stroke-width="1.9"/>
      <path d="M975.4 136.6 L979.4 140.8 M979.4 136.6 L975.4 140.8" stroke-width="1.5"/>
      <path d="M982.4 141.4 C986 140.6 990.2 137.6 992.4 132.6 C994.2 128.4 993.6 124 990.2 123.8 C986.6 123.6 984.2 128 985.2 132.6 C986.2 137.4 990.4 140.8 990.4 145 C990.4 148.6 987.4 150.6 985.8 148.8 C984.2 147 985.6 143.4 988.6 141.2 C991.6 139 996.2 137.8 998.4 135.6 C997.8 138 997.2 140.2 998.4 140.4 C1000 140.6 1002.6 136.8 1004 135.8 C1003.4 138 1003.2 140.2 1004.6 140.4 C1006.4 140.6 1008.8 138.4 1010.4 137.2" stroke-width="1.7"/>
    </g>
    <path d="M1019.4 130 L1025.2 135.2 L1031 130" stroke="#555" stroke-width="3"/>
    <!-- sliders -->
    <g stroke="#5a5a5a" stroke-width="1.9">
      <line x1="1079" y1="125.3" x2="1102.4" y2="125.3"/><line x1="1079" y1="132.9" x2="1102.4" y2="132.9"/><line x1="1079" y1="140.7" x2="1102.4" y2="140.7"/>
      <circle cx="1095.3" cy="125.3" r="2.5" fill="#e4e4e4" stroke-width="1.5"/><circle cx="1086.3" cy="132.9" r="2.5" fill="#e4e4e4" stroke-width="1.5"/><circle cx="1095.3" cy="140.7" r="2.5" fill="#e4e4e4" stroke-width="1.5"/>
    </g>
    <!-- layout -->
    <g stroke="#5a5a5a" stroke-width="2.1">
      <rect x="1145.1" y="122" width="27.8" height="20.8" rx="4"/>
      <path d="M1145.4 128.4 H1163.4 Q1166.6 128.4 1166.6 131.6 V142.6 M1158.7 128.6 V142.6" stroke-width="1.9" stroke-linecap="butt"/>
    </g>
    <line x1="1216" y1="110" x2="1216" y2="150" stroke="#b8b8b8" stroke-width="1.6"/>
    <!-- line weight -->
    <g fill="#5a5a5a" stroke="none"><rect x="1269" y="124" width="21.5" height="1.6"/><rect x="1269" y="130.2" width="21.5" height="3.6"/><rect x="1269" y="138.4" width="21.5" height="6.3"/></g>
    <path d="M1305.3 130 L1311 135.2 L1316.7 130" stroke="#555" stroke-width="3"/>
    <!-- border colour -->
    <rect x="1361.9" y="119.9" width="26.4" height="24.2" rx="4.2" fill="#e8412d" stroke="#93817f" stroke-width="1.3"/>
    <rect x="1368.3" y="126.6" width="13.8" height="10.8" fill="#e4e4e4" stroke="#a08b88" stroke-width="1"/>
    <path d="M1401.4 130.3 L1408 135.2 L1414.6 130.3" stroke="#555" stroke-width="3"/>
    <!-- fill colour -->
    <rect x="1458" y="120" width="26" height="24" rx="4" fill="#fdfdfd" stroke="#8c8c8c" stroke-width="1.6"/>
    <line x1="1460.6" y1="141.2" x2="1481.8" y2="122.6" stroke="#dc4a3f" stroke-width="1.6"/>
    <path d="M1497.4 130.3 L1504 135.2 L1510.6 130.3" stroke="#555" stroke-width="3"/>
    <path d="M1599.4 130 L1605.1 135.2 L1610.8 130" stroke="#555" stroke-width="3"/>
  </svg>
  <div class="abs" style="left:1558px;top:118px;font-size:25.5px;color:#5c5c5c;z-index:5;letter-spacing:.2px">Aa</div>

  <div id="phone">
<div class="abs" style="left:0;top:0;width:390px;height:845px;background:
radial-gradient(ellipse 95px 160px at 398px 508px, rgba(100,24,34,.92) 0%, rgba(100,24,34,.5) 50%, rgba(100,24,34,0) 100%),
linear-gradient(to right, rgba(24,12,16,0) 318px, rgba(24,12,16,.5) 372px, rgba(24,12,16,.62) 390px),
linear-gradient(to right, rgba(16,14,22,.55) 0px, rgba(16,14,22,0) 34px),
radial-gradient(ellipse 122px 96px at 172px 340px, rgba(124,46,72,.64) 0%, rgba(124,46,72,.34) 50%, rgba(124,46,72,0) 100%),
radial-gradient(ellipse 85px 75px at 62px 372px, rgba(58,80,116,.55) 0%, rgba(58,80,116,0) 100%),
radial-gradient(ellipse 205px 130px at 108px 233px, rgba(50,96,140,.95) 0%, rgba(50,96,140,.55) 45%, rgba(50,96,140,0) 100%),
radial-gradient(ellipse 105px 44px at 292px 302px, rgba(34,26,24,.75) 0%, rgba(34,26,24,.4) 55%, rgba(34,26,24,0) 100%),
radial-gradient(ellipse 100px 92px at 254px 242px, rgba(88,112,44,.85) 0%, rgba(88,112,44,.42) 50%, rgba(88,112,44,0) 100%),
radial-gradient(ellipse 125px 78px at 316px 186px, rgba(92,104,132,.8) 0%, rgba(92,104,132,.4) 50%, rgba(92,104,132,0) 100%),
radial-gradient(ellipse 130px 105px at 272px 442px, rgba(136,112,96,.85) 0%, rgba(136,112,96,.45) 50%, rgba(136,112,96,0) 100%),
radial-gradient(ellipse 75px 85px at 336px 366px, rgba(128,116,104,.6) 0%, rgba(128,116,104,.3) 50%, rgba(128,116,104,0) 100%),
radial-gradient(ellipse 90px 62px at 252px 384px, rgba(78,92,120,.7) 0%, rgba(78,92,120,.35) 50%, rgba(78,92,120,0) 100%),
radial-gradient(ellipse 120px 130px at 60px 440px, rgba(76,74,150,.75) 0%, rgba(76,74,150,.35) 50%, rgba(76,74,150,0) 100%),
radial-gradient(ellipse 170px 90px at 215px 548px, rgba(44,104,132,.9) 0%, rgba(44,104,132,.45) 50%, rgba(44,104,132,0) 100%),
radial-gradient(ellipse 110px 80px at 50px 548px, rgba(92,56,66,.7) 0%, rgba(92,56,66,0) 100%),
radial-gradient(ellipse 160px 120px at 200px 470px, rgba(64,72,80,.6) 0%, rgba(64,72,80,0) 100%),
linear-gradient(#0b0506 0px,#0d0708 112px,#181a22 160px,#22242e 330px,#2a2a32 560px);"></div>
<div class="abs" style="left:22.4px;top:8.6px;width:57.3px;height:22.7px;border-radius:12px;background:#4ec565;color:#fff;font-weight:bold;font-size:14.5px;line-height:22.7px;text-align:center;letter-spacing:.2px">7:38</div>
<svg style="left:0;top:0" width="390" height="40" viewBox="0 0 390 40">
<circle cx="313" cy="9" r="2.1" fill="#d48a3c"/>
<g fill="#fff"><rect x="305" y="25" width="3.4" height="4.6" rx=".9"/><rect x="309.9" y="22.4" width="3.4" height="7.2" rx=".9"/><rect x="314.8" y="20.1" width="3.4" height="9.5" rx=".9"/><rect x="319.7" y="17.9" width="3.4" height="11.7" rx=".9"/>
<rect x="351.3" y="19.8" width="17.6" height="8" rx="2"/><path d="M373.700 21.700 q1.800 .4 1.800 2.100 q0 1.700 -1.800 2.100z" opacity=".55"/></g>
<rect x="349.600" y="18.200" width="22.800" height="11.200" rx="3.400" fill="none" stroke="#fff" stroke-opacity=".5" stroke-width="1.100"/>
</svg>
<div class="abs" style="left:326.6px;top:16.4px;font-size:12.8px;font-weight:bold;color:#fff;transform:scaleX(.77);transform-origin:0 0;letter-spacing:.2px">LTE</div>
<div class="abs" style="left:24.2px;top:58.2px;width:279.8px;height:50.100px;border-radius:14.500px;background:rgba(52,46,49,.78)"></div>
<svg style="left:0;top:60px" width="390" height="50" viewBox="0 60 390 50" fill="none" stroke="#8b878b" stroke-width="1.900" stroke-linecap="round"><circle cx="49.200" cy="82" r="5.900"/><path d="M53.600 86.400 L60.200 91.700"/></svg>
<div class="abs" style="left:72.300px;top:72.200px;font-size:19.700px;color:#8d898d;white-space:nowrap;letter-spacing:.05px">Knihovna aplikací</div>
<div class="abs" style="left:321.500px;top:72.200px;font-size:19.400px;color:#fff;white-space:nowrap;letter-spacing:-.2px">Zrušit</div>
<div class="abs" style="left:24px;top:129.500px;font-size:18px;font-weight:bold;color:#fff">A</div>
<div class="abs" style="left:90.600px;top:182.0px;font-size:17.200px;color:#fff;white-space:nowrap;letter-spacing:-.05px;line-height:20px">ABOUT YOU</div>
<div class="abs" style="left:90.800px;top:228.4px;width:267.600px;height:1px;background:rgba(255,255,255,.065)"></div>
<div class="abs" style="left:90.600px;top:257.0px;font-size:17.200px;color:#fff;white-space:nowrap;letter-spacing:.12px;line-height:20px">AC: Identity</div>
<div class="abs" style="left:90.800px;top:303.4px;width:267.600px;height:1px;background:rgba(255,255,255,.065)"></div>
<div class="abs" style="left:90.600px;top:332.1px;font-size:17.200px;color:#fff;white-space:nowrap;letter-spacing:.3px;line-height:20px">adidas</div>
<div class="abs" style="left:90.800px;top:378.5px;width:267.600px;height:1px;background:rgba(255,255,255,.065)"></div>
<div class="abs" style="left:90.600px;top:407.0px;font-size:17.200px;color:#fff;white-space:nowrap;letter-spacing:.2px;line-height:20px">Advent 2016</div>
<div class="abs" style="left:90.800px;top:453.4px;width:267.600px;height:1px;background:rgba(255,255,255,.065)"></div>
<div class="abs" style="left:90.600px;top:481.9px;font-size:17.200px;color:#fff;white-space:nowrap;letter-spacing:.2px;line-height:20px">Advent 2018</div>
<div class="abs" style="left:90.800px;top:528.3px;width:267.600px;height:1px;background:rgba(255,255,255,.065)"></div>
<svg style="left:0;top:0" width="390" height="545" viewBox="0 0 390 545">
<defs>
<radialGradient id="acbg" cx=".5" cy=".38" r=".75"><stop offset="0" stop-color="#fbe9bd"/><stop offset=".45" stop-color="#eeb468"/><stop offset=".8" stop-color="#c87a38"/><stop offset="1" stop-color="#7a4a28"/></radialGradient>
<linearGradient id="hood" x1="0" y1="0" x2="1" y2="1"><stop offset="0" stop-color="#9a8466"/><stop offset=".5" stop-color="#6e5a44"/><stop offset="1" stop-color="#3c2e22"/></linearGradient>
<linearGradient id="a16" x1="0" y1="0" x2="0" y2="1"><stop offset="0" stop-color="#f1a29c"/><stop offset=".6" stop-color="#f5c3be"/><stop offset="1" stop-color="#f0a8a4"/></linearGradient>
<radialGradient id="a18" cx=".5" cy=".5" r=".62"><stop offset="0" stop-color="#ffffff"/><stop offset=".55" stop-color="#e9e4ee"/><stop offset=".8" stop-color="#6a6088"/><stop offset="1" stop-color="#1a163a"/></radialGradient>
<filter id="ib" x="-5%" y="-5%" width="110%" height="110%"><feGaussianBlur stdDeviation=".35"/></filter>
</defs>
<clipPath id="ic0"><rect width="49.3" height="49.3" rx="11.2"/></clipPath><g transform="translate(24.2 166.5)" clip-path="url(#ic0)" filter="url(#ib)"><rect width="49.3" height="49.3" fill="#040405"/><rect x="6.8" y="11.400" width="36.400" height="13.900" fill="#fff"/><rect x="6.800" y="25.200" width="27.300" height="12.300" fill="#fff"/><text x="8.300" y="23.400" font-family="Liberation Sans,sans-serif" font-weight="bold" font-size="12.200" fill="#050505" textLength="33.400" lengthAdjust="spacingAndGlyphs">ABOUT</text><text x="8.300" y="36" font-family="Liberation Sans,sans-serif" font-weight="bold" font-size="12.200" fill="#050505" textLength="19.600" lengthAdjust="spacingAndGlyphs">YOU</text><circle cx="30.400" cy="28.600" r="1.300" fill="none" stroke="#050505" stroke-width=".5"/></g>
<clipPath id="ic1"><rect width="49.3" height="49.3" rx="11.2"/></clipPath><g transform="translate(24.2 241.6)" clip-path="url(#ic1)" filter="url(#ib)"><rect width="49.3" height="49.3" fill="url(#acbg)"/>
<g transform="translate(24.6 49.3) scale(1.15) translate(-24.6 -49.3)"><path d="M-3 49.3 C-2 41 4 36.500 11.500 34 C10.500 22 13 7 24.600 .3 C36.500 7 39 22 38 34 C45.500 36.500 51.500 41 52.300 49.300z" fill="url(#hood)"/>
<path d="M24.600 .3 C33 7 36 17 34 27 C32.500 18 29 12.500 24.600 11.500 C20.200 12.500 16.800 18 15.300 27 C13.300 17 16.300 7 24.600 .3z" fill="#a8926f"/>
<path d="M24.600 .3 C29 5 31 9 31.500 13 C29.500 11.600 27 11 24.600 11 C22.300 11 19.800 11.600 17.800 13 C18.300 9 20.300 5 24.600 .3z" fill="#8a7456"/>
<path d="M15.500 27 C16.500 17.500 20.500 12.500 24.600 12 C28.800 12.500 32.800 17.500 33.800 27 C34 33.500 30.500 39 24.600 40.500 C18.800 39 15.300 33.500 15.500 27z" fill="#241812"/>
<path d="M18.600 24.500 C19.500 20.500 29.800 20.500 30.700 24.500 C31 30.500 28.500 36 24.600 37.200 C20.800 36 18.300 30.500 18.600 24.500z" fill="#94644a"/>
<path d="M18.400 24 C20.500 19.500 28.800 19.500 30.900 24 C28.500 26.400 20.800 26.400 18.400 24z" fill="#1c120e"/>
<path d="M20.600 26.200 h3 v1 h-3z M25.800 26.200 h3 v1 h-3z" fill="#2a1a14"/><path d="M24 27 L23.600 31.400 H25.800 L25.300 27z" fill="#7a5038"/>
<path d="M22.200 33 h5 v1.100 h-5z" fill="#4a2c22"/><path d="M20.500 33.500 C21.500 37 28 37 29 33.500 C28 35.500 21.500 35.500 20.500 33.500z" fill="#3a2418"/>
<path d="M11.500 34 C16 37.500 19.500 43 20.500 49.300 H29 C30 43 33.500 37.500 38 34 C35 39.500 30.500 42 24.600 42 C18.800 42 14.500 39.500 11.500 34z" fill="#4a3828"/>
<path d="M35 41 v7.500 M37.600 41 v7.500 M40.200 41 v7.500" stroke="#3a3020" stroke-width="1.300"/><path d="M6 44 l9 3.500" stroke="#a0603a" stroke-width="2" opacity=".65"/></g></g>
<clipPath id="ic2"><rect width="49.3" height="49.3" rx="11.2"/></clipPath><g transform="translate(24.2 316.7)" clip-path="url(#ic2)" filter="url(#ib)"><rect width="49.3" height="49.3" fill="#2b2b2d"/><path d="M8.400 27.400 L13.600 24.400 L16.500 29.400 H9.600z M15.200 20.300 L21.300 16.800 L28.600 29.400 H20.500z M22.900 12.700 L29 9.200 L40.700 29.400 H32.600z" fill="#fff"/><text x="4.200" y="39.600" font-family="Liberation Sans,sans-serif" font-weight="bold" font-size="12.600" fill="#fff" textLength="40.800" lengthAdjust="spacingAndGlyphs">adidas</text></g>
<clipPath id="ic3"><rect width="49.3" height="49.3" rx="11.2"/></clipPath><g transform="translate(24.2 391.6)" clip-path="url(#ic3)" filter="url(#ib)"><rect width="49.3" height="49.3" fill="url(#a16)"/><g fill="#fff" opacity=".75"><circle cx="4" cy="41" r="2.200"/><circle cx="9" cy="45" r="2.600"/><circle cx="15" cy="47" r="2"/><circle cx="34" cy="47" r="2.400"/><circle cx="40" cy="44" r="2.600"/><circle cx="46" cy="41" r="2.200"/><circle cx="44" cy="47.500" r="2"/><circle cx="5" cy="47" r="1.800"/></g><path d="M3.600 17 L22 22.500 V48.500 L5 43z" fill="#f4f4f6"/><path d="M22 22.500 L44.500 15.500 V41.500 L22 48.500z" fill="#e2e2e6"/><path d="M3.600 17 L25 12 L44.500 15.500 L22 22.500z" fill="#fbfbfc"/><path d="M11.300 19.300 L15.800 20.600 V46.500 L11.300 45z" fill="#d8362c"/><path d="M33.500 19 L37 17.900 V43.800 L33.500 44.900z" fill="#b82a22"/><path d="M12 17.500 L13 9 L21 6 L24 13 L27 5 L38 4.500 L36 13 L30 17 L24 16 L18 19z" fill="#d9392f"/><path d="M24 13 L27 5 L31 8 L27 15z" fill="#b82a22"/><path d="M13 9 L21 6 L20 12z" fill="#e85a4e"/><path d="M25.500 20 L33.500 12.500 L42 21 L35 29.500z" fill="#fbfbfb"/><text x="28.600" y="21.800" font-family="Liberation Sans,sans-serif" font-size="7.200" fill="#c8463c" transform="rotate(42 33 21)">25</text></g>
<clipPath id="ic4"><rect width="49.3" height="49.3" rx="11.2"/></clipPath><g transform="translate(24.2 466.5)" clip-path="url(#ic4)" filter="url(#ib)"><rect width="49.3" height="49.3" fill="url(#a18)"/><path d="M8.500 22.500 L19 25 V46.500 L8.500 42z" fill="#d53a30"/><path d="M19 25 L41 22 V42 L19 46.500z" fill="#e8483c"/><path d="M8.500 22.500 L28 19.500 L41 22 L19 25z" fill="#f06a5c"/><path d="M12.500 23.500 L15.500 24.200 V45 L12.500 43.700z" fill="#1e2a3a"/><path d="M30.500 23.400 L34 22.900 V43.400 L30.500 44.100z" fill="#1e2a3a"/><path d="M15.700 24.300 L17.500 24.700 V45.800 L15.700 45.100z" fill="#5ab4b8"/><path d="M24 21 C20 17 12 15 11 9 C13 5 18 6 20 10 C21.500 13 23 17 24 21z" fill="#2a4a66"/><path d="M24 21 C28 17 36 15 37.500 9 C35.500 5 30.500 6 28.500 10 C27 13 25 17 24 21z" fill="#2a4a66"/><path d="M24 21 C21 18 15 16 13.500 11 C16 9 19 11 20.500 13.500z" fill="#6cc4c4"/><path d="M24 21 C27 18 33 16 35 11 C32.500 9 29.500 11 28 13.500z" fill="#6cc4c4"/><path d="M20 19 h8 l2 4 h-12z" fill="#5ab4b8"/><path d="M22 9 l2 7 l2 -7 l-2 3z" fill="#14203a"/><path d="M25 31 L32.500 28.500 L36 40 L28.500 42.500z" fill="#f4f4f6"/><text x="27.400" y="38.800" font-family="Liberation Sans,sans-serif" font-size="6.400" fill="#777" transform="rotate(-16 30 36)">25</text></g>
</svg>
<div class="abs ix" style="top:142.2px">A</div>
<div class="abs" style="left:374.900px;top:159.0px;width:6.400px;height:6.400px;border-radius:50%;background:#fff"></div>
<div class="abs ix" style="top:169.1px">C</div>
<div class="abs" style="left:374.900px;top:185.9px;width:6.400px;height:6.400px;border-radius:50%;background:#fff"></div>
<div class="abs ix" style="top:195.9px">E</div>
<div class="abs" style="left:374.900px;top:212.8px;width:6.400px;height:6.400px;border-radius:50%;background:#fff"></div>
<div class="abs ix" style="top:222.8px">G</div>
<div class="abs" style="left:374.900px;top:239.6px;width:6.400px;height:6.400px;border-radius:50%;background:#fff"></div>
<div class="abs ix" style="top:249.6px">CH</div>
<div class="abs" style="left:374.900px;top:266.5px;width:6.400px;height:6.400px;border-radius:50%;background:#fff"></div>
<div class="abs ix" style="top:276.5px">K</div>
<div class="abs" style="left:374.900px;top:293.3px;width:6.400px;height:6.400px;border-radius:50%;background:#fff"></div>
<div class="abs ix" style="top:303.4px">M</div>
<div class="abs" style="left:374.900px;top:320.2px;width:6.400px;height:6.400px;border-radius:50%;background:#fff"></div>
<div class="abs ix" style="top:330.2px">O</div>
<div class="abs" style="left:374.900px;top:347.0px;width:6.400px;height:6.400px;border-radius:50%;background:#fff"></div>
<div class="abs ix" style="top:357.1px">Q</div>
<div class="abs" style="left:374.900px;top:373.9px;width:6.400px;height:6.400px;border-radius:50%;background:#fff"></div>
<div class="abs ix" style="top:383.9px">S</div>
<div class="abs" style="left:374.900px;top:400.8px;width:6.400px;height:6.400px;border-radius:50%;background:#fff"></div>
<div class="abs ix" style="top:410.8px">T</div>
<div class="abs" style="left:374.900px;top:427.6px;width:6.400px;height:6.400px;border-radius:50%;background:#fff"></div>
<div class="abs ix" style="top:437.7px">V</div>
<div class="abs" style="left:374.900px;top:454.5px;width:6.400px;height:6.400px;border-radius:50%;background:#fff"></div>
<div class="abs ix" style="top:464.5px">Y</div>
<div class="abs" style="left:374.900px;top:481.4px;width:6.400px;height:6.400px;border-radius:50%;background:#fff"></div>
<div class="abs ix" style="top:493.6px">Ž</div>
<div class="abs ix" style="top:509.2px">#</div>
<div class="abs" style="left:29.800px;top:540.300px;width:36.400px;height:1.700px;border-radius:2px 2px 0 0;background:#86c774"></div>
<div class="abs" style="left:0;top:542px;width:390px;height:303px;background:
radial-gradient(ellipse 95px 70px at 38px 22px, rgba(124,112,84,.75), rgba(124,112,84,0) 100%),
radial-gradient(ellipse 100px 90px at 175px 20px, rgba(52,92,110,.5), rgba(52,92,110,0) 100%),
radial-gradient(ellipse 60px 70px at 45px 165px, rgba(120,60,70,.45), rgba(120,60,70,0) 100%),
radial-gradient(ellipse 110px 90px at 150px 250px, rgba(44,66,74,.6), rgba(44,66,74,0) 100%),
radial-gradient(ellipse 120px 110px at 330px 260px, rgba(58,58,92,.55), rgba(58,58,92,0) 100%),
radial-gradient(ellipse 100px 80px at 350px 40px, rgba(80,52,60,.5), rgba(80,52,60,0) 100%),
linear-gradient(#36383e,#3a3b41 60%,#3b3c44);"></div>

<div class="abs k" style="left:3.2px;top:550.6px;width:32.7px;height:43.4px;line-height:43.4px;">Q</div>
<div class="abs k" style="left:42.2px;top:550.6px;width:32.7px;height:43.4px;line-height:43.4px;">W</div>
<div class="abs k" style="left:81.2px;top:550.6px;width:32.7px;height:43.4px;line-height:43.4px;">E</div>
<div class="abs k" style="left:120.3px;top:550.6px;width:32.7px;height:43.4px;line-height:43.4px;">R</div>
<div class="abs k" style="left:159.3px;top:550.6px;width:32.7px;height:43.4px;line-height:43.4px;">T</div>
<div class="abs k" style="left:198.3px;top:550.6px;width:32.7px;height:43.4px;line-height:43.4px;">Z</div>
<div class="abs k" style="left:237.3px;top:550.6px;width:32.7px;height:43.4px;line-height:43.4px;">U</div>
<div class="abs k" style="left:276.3px;top:550.6px;width:32.7px;height:43.4px;line-height:43.4px;">I</div>
<div class="abs k" style="left:315.4px;top:550.6px;width:32.7px;height:43.4px;line-height:43.4px;">O</div>
<div class="abs k" style="left:354.4px;top:550.6px;width:32.7px;height:43.4px;line-height:43.4px;">P</div>
<div class="abs k" style="left:3.2px;top:606.8px;width:32.7px;height:43.7px;line-height:43.7px;">A</div>
<div class="abs k" style="left:42.2px;top:606.8px;width:32.7px;height:43.7px;line-height:43.7px;">S</div>
<div class="abs k" style="left:81.2px;top:606.8px;width:32.7px;height:43.7px;line-height:43.7px;">D</div>
<div class="abs k" style="left:120.3px;top:606.8px;width:32.7px;height:43.7px;line-height:43.7px;">F</div>
<div class="abs k" style="left:159.3px;top:606.8px;width:32.7px;height:43.7px;line-height:43.7px;">G</div>
<div class="abs k" style="left:198.3px;top:606.8px;width:32.7px;height:43.7px;line-height:43.7px;">H</div>
<div class="abs k" style="left:237.3px;top:606.8px;width:32.7px;height:43.7px;line-height:43.7px;">J</div>
<div class="abs k" style="left:276.3px;top:606.8px;width:32.7px;height:43.7px;line-height:43.7px;">K</div>
<div class="abs k" style="left:315.4px;top:606.8px;width:32.7px;height:43.7px;line-height:43.7px;">L</div>
<div class="abs k" style="left:354.4px;top:606.8px;width:32.7px;height:43.7px;line-height:43.7px;"><span style="position:relative;top:-1.500px;font-size:20px">´</span></div>
<div class="abs k" style="left:3.2px;top:663.0px;width:32.7px;height:43.6px;line-height:43.6px;background:#dad7dc"></div>
<div class="abs k" style="left:42.2px;top:663.0px;width:32.7px;height:43.6px;line-height:43.6px;">Y</div>
<div class="abs k" style="left:81.2px;top:663.0px;width:32.7px;height:43.6px;line-height:43.6px;">X</div>
<div class="abs k" style="left:120.3px;top:663.0px;width:32.7px;height:43.6px;line-height:43.6px;">C</div>
<div class="abs k" style="left:159.3px;top:663.0px;width:32.7px;height:43.6px;line-height:43.6px;">V</div>
<div class="abs k" style="left:198.3px;top:663.0px;width:32.7px;height:43.6px;line-height:43.6px;">B</div>
<div class="abs k" style="left:237.3px;top:663.0px;width:32.7px;height:43.6px;line-height:43.6px;">N</div>
<div class="abs k" style="left:276.3px;top:663.0px;width:32.7px;height:43.6px;line-height:43.6px;">M</div>
<div class="abs k" style="left:315.4px;top:663.0px;width:32.7px;height:43.6px;line-height:43.6px;"><span style="position:relative;top:-1.500px;font-size:21px">ˇ</span></div>
<div class="abs k kd" style="left:354.4px;top:663.0px;width:32.7px;height:43.6px;line-height:43.6px;"></div>
<div class="abs k kd ks" style="left:3.2px;top:719.5px;width:90.7px;height:43.6px;line-height:43.6px;">123</div>
<div class="abs k ks" style="left:100.1px;top:719.5px;width:174.0px;height:43.6px;line-height:43.6px;"><span style="position:relative;top:-1.300px">Mezerník</span></div>
<div class="abs k ks" style="left:280.7px;top:719.5px;width:32.3px;height:43.6px;line-height:43.6px;"><span style="position:relative;top:-1px">.</span></div>
<div class="abs k ks" style="left:319.6px;top:719.5px;width:67.0px;height:43.6px;line-height:43.6px;background:#2f7cf6"><span style="position:relative;top:-1.300px">Otevřít</span></div>
<svg style="left:0;top:660px" width="390" height="185" viewBox="0 660 390 185">
<path d="M19.600 678.200 L27.400 685.600 H23.200 V691.600 H16 V685.600 H11.800z" fill="#000"/>
<path d="M363.200 684.800 L368.400 679.600 Q369 679 370 679 H377.800 Q379.400 679 379.400 680.600 V689 Q379.400 690.600 377.800 690.600 H370 Q369 690.600 368.400 690 z" fill="none" stroke="#fff" stroke-width="1.500" stroke-linejoin="round"/>
<path d="M371 682.200 L376 687.400 M376 682.200 L371 687.400" stroke="#fff" stroke-width="1.500" stroke-linecap="round"/>
<circle cx="43.100" cy="802.800" r="14.400" fill="#fff"/>
<ellipse cx="38.200" cy="798.600" rx="1.900" ry="2.500" fill="#3a3b41"/><ellipse cx="48" cy="798.600" rx="1.900" ry="2.500" fill="#3a3b41"/>
<path d="M34.200 804.400 Q43.100 807.400 52 804.400 Q50.600 812.400 43.100 812.400 Q35.600 812.400 34.200 804.400z" fill="#3a3b41"/>
<rect x="342.800" y="786.600" width="9.600" height="20.400" rx="4.800" fill="#fff"/>
<path d="M338.200 798.400 V801.400 Q338.200 810.600 347.600 810.600 Q357 810.600 357 801.400 V798.400 M347.600 810.600 V816.400 M341 816.600 H354.200" stroke="#fff" stroke-width="1.900" fill="none" stroke-linecap="round"/>
</svg>
  </div>
</div>
</body>
</html>
